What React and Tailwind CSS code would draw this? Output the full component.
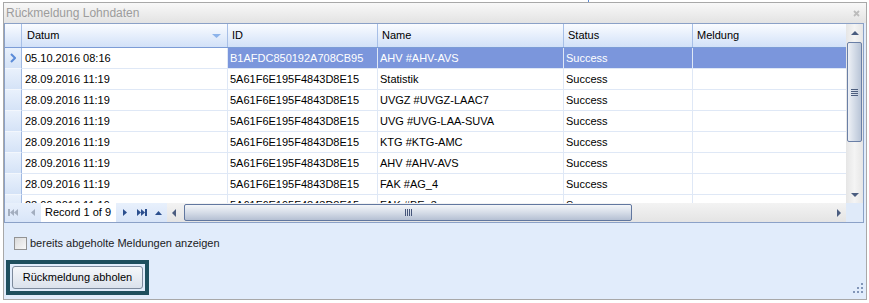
import React from 'react';

const rows = [
  { datum: '05.10.2016 08:16', id: 'B1AFDC850192A708CB95', name: 'AHV #AHV-AVS', status: 'Success', selected: true },
  { datum: '28.09.2016 11:19', id: '5A61F6E195F4843D8E15', name: 'Statistik', status: 'Success' },
  { datum: '28.09.2016 11:19', id: '5A61F6E195F4843D8E15', name: 'UVGZ #UVGZ-LAAC7', status: 'Success' },
  { datum: '28.09.2016 11:19', id: '5A61F6E195F4843D8E15', name: 'UVG #UVG-LAA-SUVA', status: 'Success' },
  { datum: '28.09.2016 11:19', id: '5A61F6E195F4843D8E15', name: 'KTG #KTG-AMC', status: 'Success' },
  { datum: '28.09.2016 11:19', id: '5A61F6E195F4843D8E15', name: 'AHV #AHV-AVS', status: 'Success' },
  { datum: '28.09.2016 11:19', id: '5A61F6E195F4843D8E15', name: 'FAK #AG_4', status: 'Success' },
  { datum: '28.09.2016 11:19', id: '5A61F6E195F4843D8E15', name: 'FAK #BE_3', status: 'Success' },
];

const Tri = ({ dir, color, w = 5, h = 8 }) => {
  const pts = {
    left: `${w},0 0,${h / 2} ${w},${h}`,
    right: `0,0 ${w},${h / 2} 0,${h}`,
    up: `0,${h} ${w / 2},0 ${w},${h}`,
    down: `0,0 ${w},0 ${w / 2},${h}`,
  }[dir];
  return (
    <svg width={w} height={h} viewBox={`0 0 ${w} ${h}`}>
      <polygon points={pts} fill={color} />
    </svg>
  );
};

const HeaderCell = ({ w, children, last }) => (
  <div
    className={`${w} h-full flex items-center pl-[4px] ${last ? '' : 'border-r border-[#a7bfe7]'}`}
  >
    {children}
  </div>
);

const GridRow = ({ row }) => {
  const sel = row.selected;
  const selCls = sel ? 'bg-[#7b96dc] text-white' : 'text-black';
  return (
    <div className="flex h-[21px] shrink-0">
      <div className="w-[17px] h-full flex items-center justify-center bg-gradient-to-b from-[#e9f1fc] to-[#d5e3f7] border-r border-[#9fb8e2] border-b border-b-[#f3f7fd]">
        {sel && (
          <svg width="6" height="10" viewBox="0 0 6 10">
            <polyline points="1,1 5,5 1,9" fill="none" stroke="#5b8bd8" strokeWidth="2" />
          </svg>
        )}
      </div>
      <div className="w-[206px] h-full flex items-center pl-[3px] border-r border-b border-[#dfe8f6] bg-white">
        {row.datum}
      </div>
      <div className={`w-[150px] h-full flex items-center pl-[2px] border-r border-b border-[#dfe8f6] ${selCls}`}>
        {row.id}
      </div>
      <div className={`w-[186px] h-full flex items-center pl-[2px] border-r border-b border-[#dfe8f6] ${selCls}`}>
        {row.name}
      </div>
      <div className={`w-[129px] h-full flex items-center pl-[2px] border-r border-b border-[#dfe8f6] ${selCls}`}>
        {row.status}
      </div>
      <div className={`w-[153px] h-full border-b border-[#dfe8f6] ${sel ? 'bg-[#7b96dc]' : ''}`} />
    </div>
  );
};

const App = () => {
  return (
    <div className="w-[869px] h-[303px] bg-white overflow-hidden font-['Liberation_Sans',Arial,sans-serif] text-[11px] text-black">
      <div className="flex h-[2px]">
        <div className="ml-[588px] w-[1px] h-[2px] bg-[#5a8ad6]" />
      </div>
      <div className="ml-[3px] w-[864px] h-[298px] border border-[#a8a8a8] flex flex-col bg-[#e1ecfb]">
        {/* title bar */}
        <div className="h-[20px] shrink-0 flex items-center justify-between pl-[2px] pr-[6px] bg-gradient-to-b from-[#f8f8f8] to-[#e3e3e3]">
          <span className="text-[12px] text-[#9c9c9c]">Rückmeldung Lohndaten</span>
          <svg width="7" height="7" viewBox="0 0 7 7">
            <path d="M1 1 L6 6 M6 1 L1 6" stroke="#bcbcbc" strokeWidth="1.8" />
          </svg>
        </div>

        {/* grid */}
        <div className="w-[860px] h-[200px] shrink-0 border border-[#8ba1c7] bg-white flex flex-col">
          <div className="flex h-[179px]">
            <div className="w-[841px] flex flex-col">
              <div className="h-[24px] shrink-0 flex border-b border-[#7c9cd6] bg-gradient-to-b from-[#fafcff] to-[#d2e1f8]">
                <div className="w-[17px] h-full border-r border-[#a7bfe7]" />
                <HeaderCell w="w-[206px] justify-between pr-[6px] pl-[5px]">
                  <span>Datum</span>
                  <Tri dir="down" color="#8cb3ea" w={9} h={4} />
                </HeaderCell>
                <HeaderCell w="w-[150px]">ID</HeaderCell>
                <HeaderCell w="w-[186px]">Name</HeaderCell>
                <HeaderCell w="w-[129px]">Status</HeaderCell>
                <HeaderCell w="w-[153px]" last>Meldung</HeaderCell>
              </div>
              <div className="h-[155px] overflow-hidden flex flex-col">
                {rows.map((r, i) => (
                  <GridRow key={i} row={r} />
                ))}
              </div>
            </div>

            {/* vertical scrollbar */}
            <div className="w-[17px] h-full flex flex-col items-center bg-gradient-to-r from-[#e6e6e6] via-[#f4f4f4] to-[#e6e6e6]">
              <div className="h-[17px] w-full flex items-center justify-center">
                <Tri dir="up" color="#4b5d80" w={8} h={4} />
              </div>
              <div className="mt-[1px] w-[15px] h-[100px] rounded-[2px] border border-[#6a7fa6] bg-gradient-to-r from-[#eef1f6] via-[#d3dbe7] to-[#b9c5d7] flex flex-col items-center justify-center gap-[1px]">
                <div className="w-[7px] h-[1px] bg-[#4d5e7e]" />
                <div className="w-[7px] h-[1px] bg-[#4d5e7e]" />
                <div className="w-[7px] h-[1px] bg-[#4d5e7e]" />
                <div className="w-[7px] h-[1px] bg-[#4d5e7e]" />
              </div>
              <div className="flex-1" />
              <div className="h-[17px] w-full flex items-center justify-center">
                <Tri dir="down" color="#4b5d80" w={8} h={4} />
              </div>
            </div>
          </div>

          {/* navigator + horizontal scrollbar */}
          <div className="h-[19px] flex">
            <div className="w-[36px] h-full flex items-center bg-gradient-to-b from-[#e8f0fc] to-[#d8e5f8]">
              <div className="ml-[3px] flex items-center">
                <div className="w-[2px] h-[7px] bg-[#a3aebf]" />
                <Tri dir="left" color="#a3aebf" w={4} h={7} />
                <Tri dir="left" color="#a3aebf" w={4} h={7} />
              </div>
              <div className="ml-[13px]">
                <Tri dir="left" color="#a3aebf" w={4} h={7} />
              </div>
            </div>
            <div className="w-[75px] h-full flex items-center pl-[4px] bg-white">Record 1 of 9</div>
            <div className="w-[51px] h-full flex items-center bg-gradient-to-b from-[#e8f0fc] to-[#d8e5f8]">
              <div className="ml-[7px]">
                <Tri dir="right" color="#2b4f8e" w={4} h={7} />
              </div>
              <div className="ml-[10px] flex items-center">
                <Tri dir="right" color="#2b4f8e" w={4} h={7} />
                <Tri dir="right" color="#2b4f8e" w={4} h={7} />
                <div className="w-[2px] h-[7px] bg-[#2b4f8e]" />
              </div>
              <div className="ml-[8px]">
                <Tri dir="up" color="#2b4f8e" w={7} h={4} />
              </div>
            </div>
            <div className="w-[679px] h-full flex items-center bg-gradient-to-b from-[#f3f3f3] to-[#e4e4e4]">
              <div className="ml-[5px]">
                <Tri dir="left" color="#4b5d80" w={4} h={8} />
              </div>
              <div className="ml-[8px] w-[448px] h-[17px] rounded-[2px] border border-[#61779f] bg-gradient-to-b from-[#f4f6f9] via-[#d6dde8] to-[#b5c0d3] flex items-center justify-center gap-[1px]">
                <div className="w-[1px] h-[7px] bg-[#45557a]" />
                <div className="w-[1px] h-[7px] bg-[#45557a]" />
                <div className="w-[1px] h-[7px] bg-[#45557a]" />
                <div className="w-[1px] h-[7px] bg-[#45557a]" />
              </div>
              <div className="flex-1" />
              <div className="mr-[5px]">
                <Tri dir="right" color="#4b5d80" w={4} h={8} />
              </div>
            </div>
            <div className="w-[17px] h-full bg-[#dfeaf9]" />
          </div>
        </div>

        {/* bottom panel */}
        <div className="flex-1 flex flex-col pt-[14px] pl-[2px]">
          <div className="ml-[8px] h-[13px] flex items-center gap-[3px]">
            <div className="w-[13px] h-[13px] border border-[#939393] bg-gradient-to-br from-[#dadada] to-[#f9f9f9]" />
            <span className="text-[#1b1b1b]">bereits abgeholte Meldungen anzeigen</span>
          </div>
          <div className="mt-[10px] flex items-end justify-between">
            <div className="w-[143px] h-[35px] border-[4px] border-[#1e4f5e] p-[2px]">
              <button className="w-[131px] h-[23px] rounded-[3px] border border-[#7d8a9c] bg-gradient-to-b from-[#f5f7fa] to-[#dbe2ec] text-black text-[11px] flex items-center justify-center">
                Rückmeldung abholen
              </button>
            </div>
            <svg width="10" height="10" viewBox="0 0 10 10" className="mr-[3px] mb-[2px]">
              <rect x="8" y="0" width="2" height="2" fill="#8296b8" />
              <rect x="4" y="4" width="2" height="2" fill="#8296b8" />
              <rect x="8" y="4" width="2" height="2" fill="#8296b8" />
              <rect x="0" y="8" width="2" height="2" fill="#8296b8" />
              <rect x="4" y="8" width="2" height="2" fill="#8296b8" />
              <rect x="8" y="8" width="2" height="2" fill="#8296b8" />
            </svg>
          </div>
        </div>
      </div>
    </div>
  );
};

export default App;
